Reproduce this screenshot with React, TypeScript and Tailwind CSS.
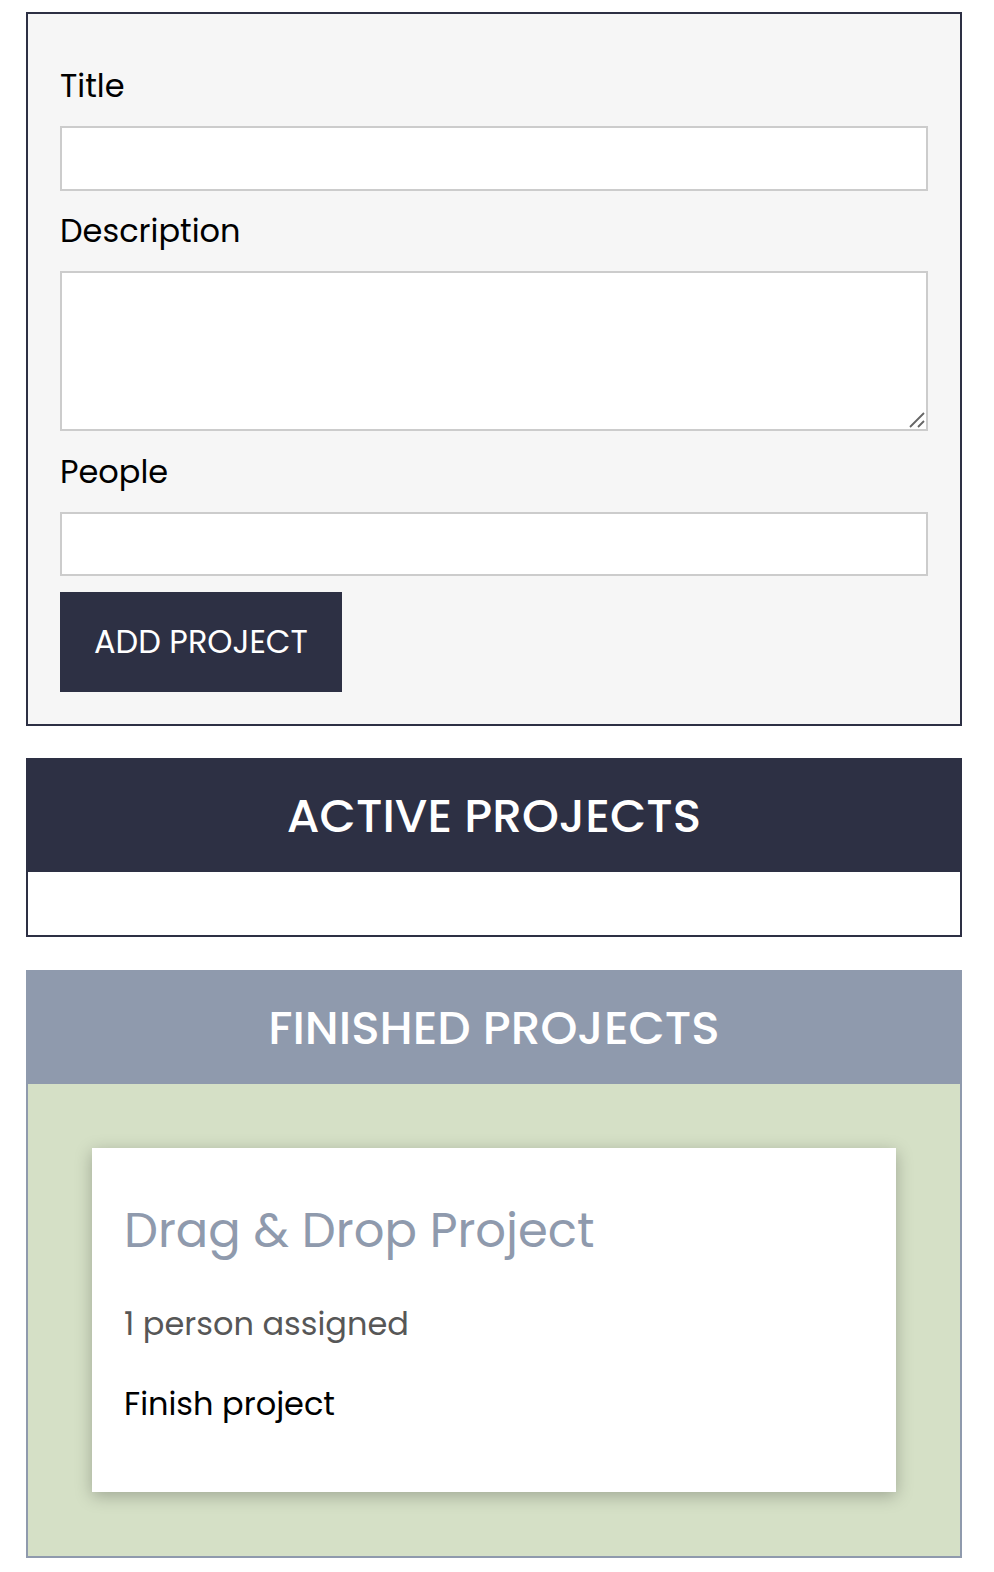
import React from "react";

const font = { fontFamily: "Poppins, Inter, 'Noto Sans', sans-serif" };

const App: React.FC = () => {
  return (
    <div className="min-h-[1572px] bg-white pt-[12px] pl-[26px] text-black" style={font}>
      {/* New project form */}
      <form
        className="w-[936px] border-2 border-[#2d3044] bg-[#f6f6f6] p-[32px]"
        onSubmit={(e) => e.preventDefault()}
      >
        <div className="flex flex-col">
          <label className="mt-[16px] mb-[16px] block text-[32px] leading-[48px] font-normal">Title</label>
          <input type="text" className="h-[65px] w-full border-2 border-[#cccccc] bg-white px-3 outline-none" />
          <label className="mt-[16px] mb-[16px] block text-[32px] leading-[48px] font-normal">Description</label>
          <div className="relative h-[160px] w-full">
            <textarea className="block h-full w-full resize-none border-2 border-[#cccccc] bg-white px-3 outline-none" />
            {/* resize grip */}
            <svg className="pointer-events-none absolute right-[3px] bottom-[3px]" width="16" height="16" viewBox="0 0 16 16">
              <path d="M15 1 L1 15 M15 9 L9 15" stroke="#666666" strokeWidth="1.8" fill="none" />
            </svg>
          </div>
          <label className="mt-[17px] mb-[16px] block text-[32px] leading-[48px] font-normal">People</label>
          <input type="number" className="h-[64px] w-full border-2 border-[#cccccc] bg-white px-3 outline-none" />
        </div>
        <button
          type="submit"
          className="mt-[16px] h-[100px] bg-[#2d3044] px-[34px] text-[32px] font-normal text-white"
        >
          ADD PROJECT
        </button>
      </form>

      {/* Active projects */}
      <section className="mt-[32px] w-[936px] border-2 border-[#2d3044] bg-white">
        <header className="flex h-[112px] items-center justify-center bg-[#2d3044]">
          <h2 className="text-[47px] leading-[56px] font-medium text-white">ACTIVE PROJECTS</h2>
        </header>
        <ul className="h-[63px]" />
      </section>

      {/* Finished projects */}
      <section className="mt-[33px] w-[936px] border-2 border-[#8f9aad] bg-[#d5e0c6]">
        <header className="flex h-[112px] items-center justify-center bg-[#8f9aad]">
          <h2 className="text-[47px] leading-[56px] font-medium text-white">FINISHED PROJECTS</h2>
        </header>
        <ul className="p-[32px]">
          <li className="m-[32px] bg-white px-[32px] pt-[32px] pb-[32px] shadow-[0_4px_16px_rgba(0,0,0,0.26)]">
            <h2 className="mt-[23px] text-[48px] leading-[56px] font-normal text-[#8f9aad]">Drag &amp; Drop Project</h2>
            <h3 className="mt-[41px] text-[32px] leading-[48px] font-normal text-[#575757]">1 person assigned</h3>
            <p className="mt-[32px] mb-[32px] text-[32px] leading-[48px]">Finish project</p>
          </li>
        </ul>
      </section>
    </div>
  );
};

export default App;
